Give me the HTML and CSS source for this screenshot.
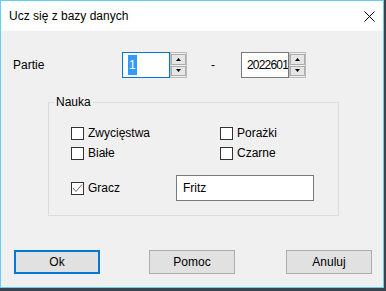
FILE: index.html
```html
<!DOCTYPE html>
<html lang="pl">
<head>
<meta charset="utf-8">
<title>Ucz się z bazy danych</title>
<link rel="stylesheet" href="styles.css">
</head>
<body>
<div class="window">
  <div class="titlebar">
    <span class="title">Ucz się z bazy danych</span>
    <svg class="close" width="11" height="11" viewBox="0 0 11 11"><path d="M0.5 0.5 L10.5 10.5 M10.5 0.5 L0.5 10.5" stroke="#000" stroke-width="1" fill="none"/></svg>
  </div>
  <div class="content">
    <div class="partie-row">
      <span class="lbl">Partie</span>
      <div class="spinner">
        <div class="edit edit-focus"><span class="sel">1</span></div>
        <div class="spin">
          <div class="sb"><svg width="5" height="3" viewBox="0 0 5 3"><polygon points="2.5,0 5,3 0,3" fill="#000"/></svg></div>
          <div class="sb"><svg width="5" height="3" viewBox="0 0 5 3"><polygon points="0,0 5,0 2.5,3" fill="#000"/></svg></div>
        </div>
      </div>
      <span class="dash">-</span>
      <div class="spinner">
        <div class="edit"><span class="num">2022601</span></div>
        <div class="spin">
          <div class="sb"><svg width="5" height="3" viewBox="0 0 5 3"><polygon points="2.5,0 5,3 0,3" fill="#000"/></svg></div>
          <div class="sb"><svg width="5" height="3" viewBox="0 0 5 3"><polygon points="0,0 5,0 2.5,3" fill="#000"/></svg></div>
        </div>
      </div>
    </div>

    <fieldset class="group">
      <legend>Nauka</legend>
      <div class="group-body">
        <div class="cb-row">
          <label class="cb-item"><span class="box"></span>Zwycięstwa</label>
          <label class="cb-item"><span class="box"></span>Porażki</label>
        </div>
        <div class="cb-row">
          <label class="cb-item"><span class="box"></span>Białe</label>
          <label class="cb-item"><span class="box"></span>Czarne</label>
        </div>
        <div class="cb-row player-row">
          <label class="cb-item short"><span class="box"><svg width="11" height="11" viewBox="0 0 11 11"><polyline points="1,5 4,8.5 10,1.5" stroke="#6b6b6b" stroke-width="1" fill="none"/></svg></span>Gracz</label>
          <div class="textbox">Fritz</div>
        </div>
      </div>
    </fieldset>

    <div class="buttons">
      <button class="btn btn-default">Ok</button>
      <button class="btn btn-help">Pomoc</button>
      <button class="btn btn-cancel">Anuluj</button>
    </div>
  </div>
</div>
</body>
</html>
```

FILE: styles.css
```css
* { box-sizing: border-box; }
html, body { margin: 0; padding: 0; }
body {
  width: 386px;
  height: 291px;
  overflow: hidden;
  background: #3a4350;
  font-family: "Liberation Sans", Arial, sans-serif;
  font-size: 12px;
  color: #000;
}
.window {
  width: 384px;
  height: 288px;
  border: 1px solid #62d2ee;
  background: #f0f0f0;
  display: flex;
  flex-direction: column;
}
.titlebar {
  height: 30px;
  flex: none;
  background: #fff;
  display: flex;
  align-items: center;
  padding: 0 8px 0 8px;
}
.title { font-size: 12px; }
.close { margin-left: auto; display: block; }
.content {
  flex: 1;
  padding: 21px 0 0 12px;
}
.partie-row {
  display: flex;
  align-items: center;
  height: 26px;
}
.lbl { width: 109px; flex: none; }
.spinner {
  display: flex;
  flex: none;
  width: 65px;
  height: 26px;
}
.edit {
  width: 48px;
  height: 26px;
  flex: none;
  border: 1px solid #7a7a7a;
  background: #fff;
  padding-left: 5px;
  display: flex;
  align-items: center;
  overflow: hidden;
  white-space: nowrap;
}
.edit-focus { border-color: #0078d7; }
.sel {
  background: #3399ff;
  color: #fff;
  line-height: 20px;
  padding: 0 1px;
}
.num { letter-spacing: -0.8px; }
.spin {
  width: 17px;
  height: 26px;
  flex: none;
  border: 1px solid #bcbcbc;
  padding: 1px 0;
  display: flex;
  flex-direction: column;
  gap: 1px;
}
.sb {
  flex: 1;
  border: 1px solid #adadad;
  background: #e6e6e6;
  display: flex;
  align-items: center;
  justify-content: center;
}
.sb svg { display: block; }
.dash {
  width: 54px;
  flex: none;
  padding-left: 24px;
}
.group {
  margin: 16px 0 0 35px;
  width: 291px;
  border: 1px solid #dcdcdc;
  padding: 13px 0 14px 0;
  min-width: 0;
}
.group legend {
  margin-left: 5px;
  padding: 0 2px;
  line-height: 16px;
}
.group-body { margin-left: 22px; }
.cb-row {
  display: flex;
  align-items: center;
  height: 20px;
}
.cb-item {
  display: flex;
  flex: none;
  align-items: center;
  gap: 4px;
  width: 149px;
}
.cb-item.short { width: 105px; }
.box {
  width: 13px;
  height: 13px;
  flex: none;
  border: 1px solid #333;
  background: #fff;
  display: block;
}
.box svg { display: block; }
.player-row {
  margin-top: 12px;
  height: 26px;
}
.textbox {
  width: 138px;
  height: 26px;
  flex: none;
  border: 1px solid #7a7a7a;
  background: #fff;
  padding-left: 6px;
  display: flex;
  align-items: center;
}
.buttons {
  display: flex;
  margin-top: 34px;
}
.btn {
  width: 86px;
  height: 24px;
  flex: none;
  font: inherit;
  color: #000;
  background: #e1e1e1;
  border: 1px solid #adadad;
  padding: 0;
  border-radius: 0;
}
.btn-default { margin-left: 1px; border: 2px solid #0078d7; }
.btn-help { margin-left: 49px; }
.btn-cancel { margin-left: 51px; }
```
